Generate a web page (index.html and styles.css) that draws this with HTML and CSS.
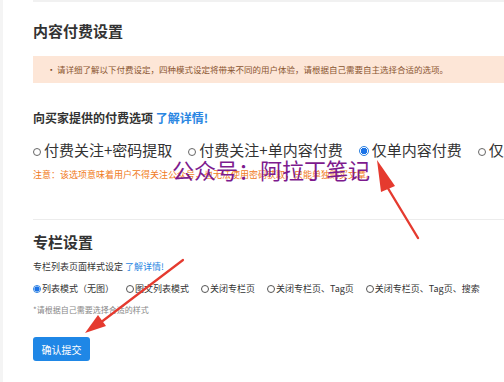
FILE: index.html
```html
<!DOCTYPE html>
<html lang="zh-CN">
<head>
<meta charset="utf-8">
<title>内容付费设置</title>
<link rel="stylesheet" href="styles.css">
</head>
<body>
<div class="page">
  <div class="topline"></div>

  <h2 class="title">内容付费设置</h2>
  <div class="notice"><span class="dot">•</span>请详细了解以下付费设定，四种模式设定将带来不同的用户体验，请根据自己需要自主选择合适的选项。</div>

  <h3 class="subtitle">向买家提供的付费选项 <a class="link">了解详情!</a></h3>
  <div class="options big">
    <label class="opt"><span class="radio"></span>付费关注+密码提取</label>
    <label class="opt"><span class="radio"></span>付费关注+单内容付费</label>
    <label class="opt"><span class="radio checked"></span>仅单内容付费</label>
    <label class="opt"><span class="radio"></span>仅付费关注</label>
  </div>
  <p class="warn">注意：该选项意味着用户不得关注公众号，也无法使用密码获取，只能单独购买文章。</p>

  <hr class="sep">

  <h2 class="title title2">专栏设置</h2>
  <p class="desc">专栏列表页面样式设定 <a class="link">了解详情!</a></p>
  <div class="options small">
    <label class="opt"><span class="radio checked"></span>列表模式（无图）</label>
    <label class="opt"><span class="radio"></span>图文列表模式</label>
    <label class="opt"><span class="radio"></span>关闭专栏页</label>
    <label class="opt"><span class="radio"></span>关闭专栏页、Tag页</label>
    <label class="opt"><span class="radio"></span>关闭专栏页、Tag页、搜索</label>
  </div>
  <p class="hint">*请根据自己需要选择合适的样式</p>

  <button class="submit">确认提交</button>

  <div class="watermark">公众号：阿拉丁笔记</div>
  <svg class="arrows" width="504" height="382" viewBox="0 0 504 382">
    <line x1="418" y1="238" x2="386" y2="185" stroke="#e53a2f" stroke-width="2.4" stroke-linecap="round"/>
    <polygon points="377,160 395,186 381,192" fill="#e53a2f"/>
    <line x1="183" y1="260" x2="100" y2="323" stroke="#e53a2f" stroke-width="2.2" stroke-linecap="round"/>
    <polygon points="85,333 98,315 106,326" fill="#e53a2f"/>
  </svg>
</div>
</body>
</html>
```
FILE: styles.css
```css
* { box-sizing: border-box; }
html, body {
  margin: 0;
  padding: 0;
  background: #f4f4f4;
  overflow: hidden;
}
body {
  font-family: "Noto Sans CJK SC", "Noto Sans", sans-serif;
  color: #333;
}
.page {
  position: relative;
  margin-left: 3px;
  width: 501px;
  height: 382px;
  background: #fff;
  padding-left: 30px;
  overflow: hidden;
}
.topline {
  height: 2px;
  background: #f1f1f1;
}
.title {
  margin: 19px 0 0;
  font-size: 15px;
  line-height: 20px;
  font-weight: 700;
  color: #333;
}
.notice {
  margin-top: 15px;
  height: 27px;
  line-height: 27px;
  background: #fde6d7;
  color: #8a5530;
  font-size: 8.5px;
  padding-left: 14px;
  white-space: nowrap;
}
.dot {
  display: inline-block;
  width: 10px;
  color: #7a4520;
}
.subtitle {
  margin: 27px 0 0;
  font-size: 12px;
  line-height: 16px;
  font-weight: 700;
  color: #333;
}
.link {
  color: #2a86e2;
  text-decoration: none;
}
.options {
  display: flex;
  flex-wrap: nowrap;
  white-space: nowrap;
}
.opt {
  display: inline-flex;
  align-items: center;
  flex-shrink: 0;
}
.big {
  margin-top: 14px;
  font-size: 15px;
  line-height: 20px;
  gap: 16px;
  color: #333;
}
.big .opt { gap: 3px; }
.radio {
  display: inline-block;
  width: 8px;
  height: 8px;
  border: 1px solid #666;
  border-radius: 50%;
  background: #fff;
}
.big .radio { margin-top: 3px; }
.big .radio.checked {
  width: 10px;
  height: 10px;
  margin-top: 1px;
  border: 1px solid #2a7fe0;
  background: radial-gradient(circle, #1a73e8 0 3px, #fff 3.4px);
}
.warn {
  margin: 9px 0 0;
  font-size: 9px;
  line-height: 12px;
  color: #f07a22;
  white-space: nowrap;
}
.sep {
  margin: 38px 0 0;
  border: 0;
  border-top: 1px solid #ececec;
  height: 0;
}
.title2 { margin-top: 12px; }
.desc {
  margin: 9px 0 0;
  font-size: 9px;
  line-height: 12px;
  color: #333;
}
.small {
  margin-top: 10px;
  font-size: 9px;
  line-height: 12px;
  gap: 12px;
  color: #333;
}
.small .opt { gap: 1px; }
.small .radio {
  width: 8px;
  height: 8px;
  border-color: #555;
}
.small .radio.checked {
  border-color: #2a7fe0;
  background: radial-gradient(circle, #1a73e8 0 2.3px, #fff 2.8px);
}
.hint {
  margin: 9px 0 0;
  font-size: 8px;
  line-height: 12px;
  color: #888;
}
.submit {
  display: block;
  margin-top: 21px;
  width: 57px;
  height: 24px;
  border: 0;
  border-radius: 3px;
  background: #1f87e6;
  color: #fff;
  font-family: inherit;
  font-size: 10px;
  padding: 0;
}
.watermark {
  position: absolute;
  left: 169px;
  top: 155px;
  font-size: 22px;
  line-height: 28px;
  color: #7d1a8e;
  white-space: nowrap;
}
.arrows {
  position: absolute;
  left: -3px;
  top: 0;
  pointer-events: none;
}
```
